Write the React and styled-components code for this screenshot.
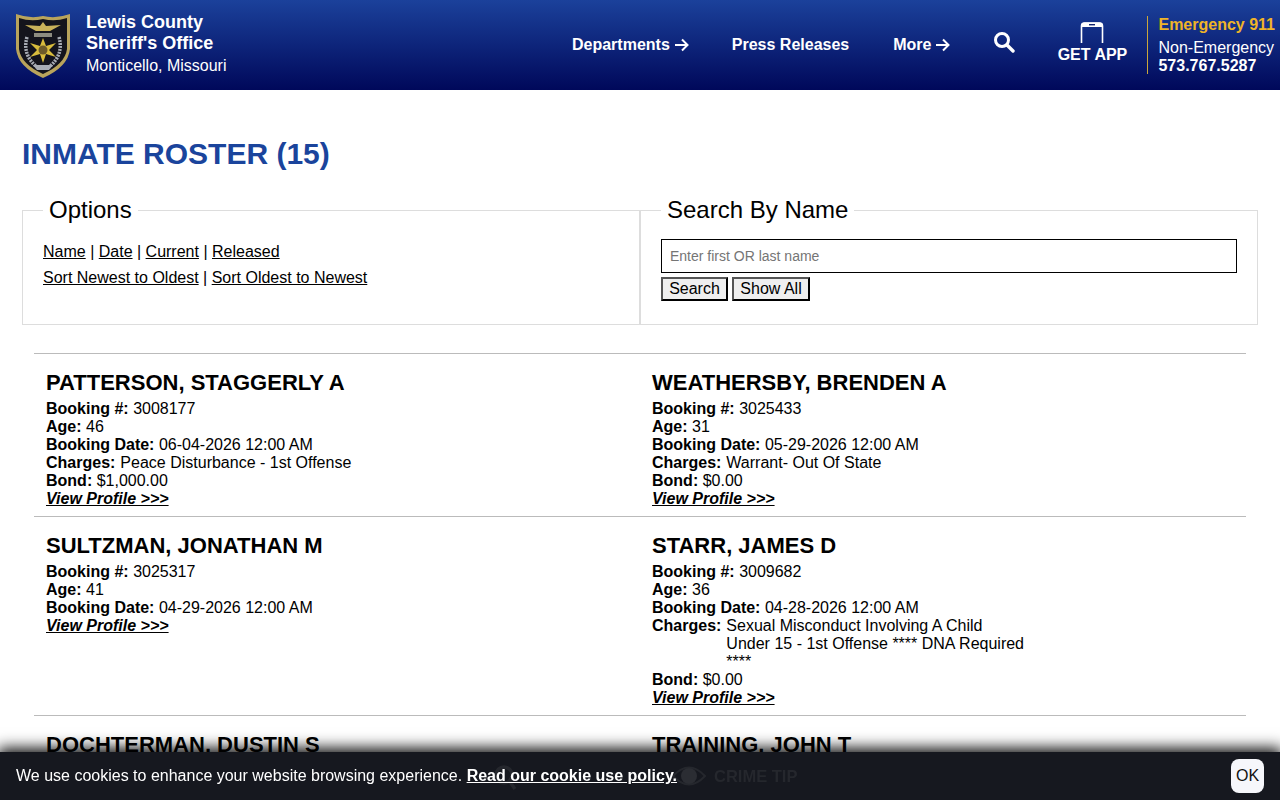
import React from "react";
import styled, { createGlobalStyle } from "styled-components";

const inmates = [
  [
    {
      name: "PATTERSON, STAGGERLY A",
      booking: "3008177",
      age: "46",
      date: "06-04-2026 12:00 AM",
      charges: "Peace Disturbance - 1st Offense",
      bond: "$1,000.00",
    },
    {
      name: "WEATHERSBY, BRENDEN A",
      booking: "3025433",
      age: "31",
      date: "05-29-2026 12:00 AM",
      charges: "Warrant- Out Of State",
      bond: "$0.00",
    },
  ],
  [
    {
      name: "SULTZMAN, JONATHAN M",
      booking: "3025317",
      age: "41",
      date: "04-29-2026 12:00 AM",
    },
    {
      name: "STARR, JAMES D",
      booking: "3009682",
      age: "36",
      date: "04-28-2026 12:00 AM",
      charges: "Sexual Misconduct Involving A Child Under 15 - 1st Offense **** DNA Required ****",
      bond: "$0.00",
    },
  ],
  [{ name: "DOCHTERMAN, DUSTIN S" }, { name: "TRAINING, JOHN T" }],
];

const Badge = () => (
  <svg width="54" height="65" viewBox="0 0 54 65">
    <path d="M0 1 Q14 6 27 3 Q40 6 54 1 L54 36 Q52 54 27 65 Q2 54 0 36 Z" fill="#b9a45c" />
    <path d="M3 5 Q15 9 27 6 Q39 9 51 5 L51 36 Q49 51 27 61 Q5 51 3 36 Z" fill="#14141c" />
    <path d="M9 12 L24 13 L27 9 L30 13 L45 12 L34 18 L20 18 Z" fill="#c9b25a" />
    <rect x="18" y="20" width="18" height="4" fill="#8d8c80" />
    <path d="M11 24 Q6 42 21 54" fill="none" stroke="#a9adb5" strokeWidth="3.5" strokeDasharray="2 1" />
    <path d="M43 24 Q48 42 33 54" fill="none" stroke="#a9adb5" strokeWidth="3.5" strokeDasharray="2 1" />
    <path
      d="M27 25 L30 33 L40 30 L33 37 L40 44 L30 41 L27 50 L24 41 L14 44 L21 37 L14 30 L24 33 Z"
      fill="#d8bc3c"
    />
    <circle cx="27" cy="37" r="4.5" fill="#6d5b2a" />
    <path d="M17 52 L37 52 L33 57 L21 57 Z" fill="#a9adb5" />
  </svg>
);

const SearchIcon = () => (
  <svg width="22" height="22" viewBox="0 0 22 22" fill="none" stroke="#fff">
    <circle cx="9" cy="9" r="6.5" strokeWidth="3" />
    <path d="M14 14 L20 20" strokeWidth="3.4" strokeLinecap="round" />
  </svg>
);

const PhoneIcon = () => (
  <svg width="24" height="22" viewBox="0 0 24 22" fill="none">
    <path d="M1.5 21 V4 Q1.5 1 4.5 1 H19.5 Q22.5 1 22.5 4 V21" stroke="#fff" strokeWidth="1.6" />
    <path d="M1 5 V3.5 Q1 .5 4.5 .5 H19.5 Q23 .5 23 3.5 V5 Z" fill="#fff" />
    <rect x="9" y="2" width="6" height="1.4" fill="#10236f" />
  </svg>
);

const Arrow = () => (
  <svg width="15" height="14" viewBox="0 0 15 14" fill="none" stroke="#fff" strokeWidth="2">
    <path d="M1 7 H13.5 M8 1.5 L13.5 7 L8 12.5" />
  </svg>
);

const InmateCard = ({ inmate }) => (
  <Card>
    <Name>{inmate.name}</Name>
    {inmate.booking && (
      <>
        <div>
          <b>Booking #:</b> {inmate.booking}
        </div>
        <div>
          <b>Age:</b> {inmate.age}
        </div>
        <div>
          <b>Booking Date:</b> {inmate.date}
        </div>
        {inmate.charges && (
          <ChargeLine>
            <b>Charges:</b>
            <ChargeText>{inmate.charges}</ChargeText>
          </ChargeLine>
        )}
        {inmate.bond && (
          <div>
            <b>Bond:</b> {inmate.bond}
          </div>
        )}
        <ProfileLink href="#">View Profile &gt;&gt;&gt;</ProfileLink>
      </>
    )}
  </Card>
);

const App = () => {
  return (
    <>
      <GlobalStyle />
      <Header>
        <Brand>
          <Badge />
          <BrandText>
            <strong>Lewis County</strong>
            <strong>Sheriff's Office</strong>
            <span>Monticello, Missouri</span>
          </BrandText>
        </Brand>
        <Nav>
          <NavItem $left={0}>
            Departments <Arrow />
          </NavItem>
          <NavItem $left={43}>Press Releases</NavItem>
          <NavItem $left={44}>
            More <Arrow />
          </NavItem>
          <SearchButton>
            <SearchIcon />
          </SearchButton>
          <GetApp>
            <PhoneIcon />
            <span>GET APP</span>
          </GetApp>
          <Contact>
            <Emergency>Emergency 911</Emergency>
            <span>Non-Emergency</span>
            <strong>573.767.5287</strong>
          </Contact>
        </Nav>
      </Header>

      <Main>
        <Title>INMATE ROSTER (15)</Title>
        <Filters>
          <FilterBox>
            <legend>Options</legend>
            <FilterLinks>
              <a href="#">Name</a> | <a href="#">Date</a> | <a href="#">Current</a> |{" "}
              <a href="#">Released</a>
            </FilterLinks>
            <FilterLinks>
              <a href="#">Sort Newest to Oldest</a> | <a href="#">Sort Oldest to Newest</a>
            </FilterLinks>
          </FilterBox>
          <FilterBox>
            <legend>Search By Name</legend>
            <SearchInput placeholder="Enter first OR last name" />
            <Buttons>
              <FormButton $width={67}>Search</FormButton>
              <FormButton $width={78}>Show All</FormButton>
            </Buttons>
          </FilterBox>
        </Filters>

        <Roster>
          {inmates.map((row) => (
            <Row key={row[0].name}>
              {row.map((inmate) => (
                <InmateCard key={inmate.name} inmate={inmate} />
              ))}
            </Row>
          ))}
        </Roster>
      </Main>

      <CookieBar>
        <MagnifierMark>
          <svg width="28" height="26" viewBox="0 0 28 26" fill="none" stroke="#25272d" strokeWidth="3.5">
            <circle cx="13" cy="10" r="8" />
            <path d="M19 17 L24 24" />
          </svg>
        </MagnifierMark>
        <CrimeTip>
          <svg width="34" height="24" viewBox="0 0 34 24">
            <path d="M1 12 Q17 -5 33 12 Q17 29 1 12 Z" fill="none" stroke="#25272d" strokeWidth="2" />
            <circle cx="17" cy="12" r="8" fill="#2b2d33" />
          </svg>
          <span>CRIME TIP</span>
        </CrimeTip>
        <CookieText>
          We use cookies to enhance your website browsing experience. <a href="#">Read our cookie use policy.</a>
        </CookieText>
        <OkButton>OK</OkButton>
      </CookieBar>
    </>
  );
};

const GlobalStyle = createGlobalStyle`
  html, body {
    margin: 0;
    height: 100%;
    overflow: hidden;
    background: #fff;
    color: #000;
    font-family: "Liberation Sans", Arial, sans-serif;
    font-size: 16px;
  }
  * {
    box-sizing: border-box;
  }
  a {
    color: #000;
  }
`;

const Header = styled.header`
  display: flex;
  justify-content: space-between;
  align-items: center;
  height: 90px;
  padding: 0 5px 0 16px;
  background: linear-gradient(#1b419b, #00085a);
  color: #fff;
`;

const Brand = styled.div`
  display: flex;
  align-items: center;
  gap: 16px;
`;

const BrandText = styled.div`
  display: flex;
  flex-direction: column;
  margin-top: -2px;
  font-size: 16px;
  line-height: 21.5px;
  strong {
    font-size: 18px;
  }
`;

const Nav = styled.nav`
  display: flex;
  align-items: center;
`;

const NavItem = styled.a`
  display: flex;
  align-items: center;
  gap: 4px;
  margin-left: ${(p) => p.$left}px;
  font-size: 16px;
  font-weight: bold;
  color: #fff;
`;

const SearchButton = styled.div`
  display: flex;
  margin: -6px 0 0 43px;
`;

const GetApp = styled.div`
  display: flex;
  flex-direction: column;
  align-items: center;
  gap: 2px;
  width: 70px;
  margin: -5px 1px 0 42px;
  font-size: 16px;
  font-weight: bold;
`;

const Contact = styled.div`
  display: flex;
  flex-direction: column;
  height: 58px;
  margin-left: 19px;
  padding-left: 10px;
  border-left: 1px solid #c9a63c;
  font-size: 16px;
  line-height: 18px;
  white-space: nowrap;
`;

const Emergency = styled.strong`
  margin-bottom: 5px;
  color: #efb428;
`;

const Main = styled.main`
  padding: 0 22px;
`;

const Title = styled.h1`
  margin: 0;
  padding-top: 46px;
  font-size: 30px;
  line-height: 36px;
  color: #1a449c;
`;

const Filters = styled.div`
  display: grid;
  grid-template-columns: 618px 618px;
  margin-top: 24px;
`;

const FilterBox = styled.fieldset`
  height: 129px;
  margin: 0;
  padding: 15px 20px 0;
  border: 1px solid #ddd;
  legend {
    padding: 0 6px;
    font-size: 24px;
    line-height: 28px;
  }
`;

const FilterLinks = styled.div`
  line-height: 26px;
  font-size: 16px;
`;

const SearchInput = styled.input`
  display: block;
  width: 576px;
  height: 34px;
  padding: 0 8px;
  border: 1px solid #000;
  font-family: inherit;
  font-size: 14px;
  &::placeholder {
    color: #757575;
  }
`;

const Buttons = styled.div`
  display: flex;
  gap: 4px;
  margin-top: 4px;
`;

const FormButton = styled.button`
  width: ${(p) => p.$width}px;
  height: 24px;
  padding: 0;
  background: #efefef;
  border: 2px solid;
  border-color: #555 #000 #000 #555;
  font-family: inherit;
  font-size: 16px;
  color: #000;
`;

const Roster = styled.div`
  margin: 28px 12px 0;
`;

const Row = styled.div`
  display: grid;
  grid-template-columns: 606px 1fr;
  border-top: 1px solid #bbb;
`;

const Card = styled.div`
  display: flex;
  flex-direction: column;
  align-items: flex-start;
  padding: 14px 12px 8px;
  font-size: 16px;
  line-height: 18px;
`;

const Name = styled.h2`
  margin: 0 0 2px;
  font-size: 22px;
  line-height: 30px;
  font-weight: bold;
`;

const ChargeLine = styled.div`
  display: flex;
  gap: 5px;
`;

const ChargeText = styled.span`
  width: 300px;
`;

const ProfileLink = styled.a`
  font-weight: bold;
  font-style: italic;
`;

const CookieBar = styled.div`
  position: fixed;
  left: 0;
  right: 0;
  bottom: 0;
  display: flex;
  justify-content: space-between;
  align-items: center;
  height: 48px;
  padding: 0 16px;
  background: #16181f;
  box-shadow: 0 -2px 14px 2px rgba(0, 0, 0, 0.95);
  color: #fff;
`;

const MagnifierMark = styled.div`
  position: absolute;
  left: 491px;
  top: 13px;
  display: flex;
`;

const CrimeTip = styled.div`
  position: absolute;
  left: 672px;
  top: 12px;
  display: flex;
  align-items: center;
  gap: 8px;
  color: #25272d;
  font-size: 16.5px;
  font-weight: bold;
  white-space: nowrap;
`;

const CookieText = styled.div`
  position: relative;
  font-size: 16px;
  a {
    color: #fff;
    font-weight: bold;
  }
`;

const OkButton = styled.button`
  height: 34px;
  width: 33px;
  padding: 0;
  border: 0;
  border-radius: 8px;
  background: #f6f7fb;
  color: #111;
  font-family: inherit;
  font-size: 16px;
`;

export default App;
